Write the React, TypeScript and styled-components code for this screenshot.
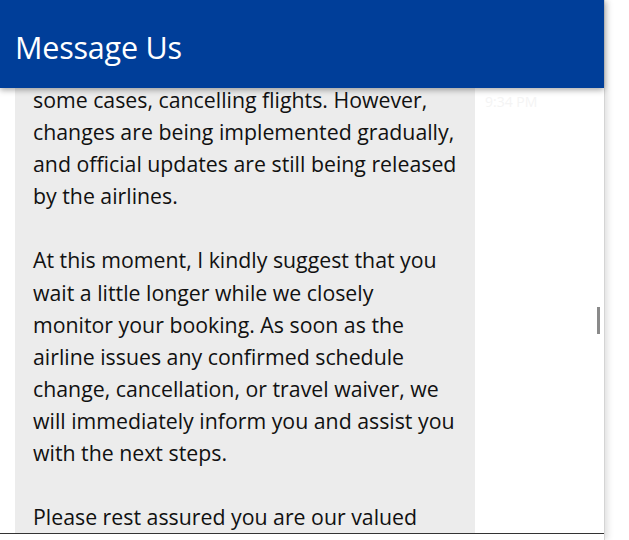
import { FC } from 'react'
import styled, { createGlobalStyle } from 'styled-components'

const GlobalStyle = createGlobalStyle`
  html, body {
    margin: 0;
    padding: 0;
    background: #ffffff;
    font-family: 'Open Sans', 'Noto Sans', sans-serif;
  }
`

const Page = styled.div`
  height: 540px;
  overflow: hidden;
  width: 629px;
`

const Panel = styled.div`
  background: #ffffff;
  border-right: 1px solid #d4d4d4;
  box-shadow: 3px 0 6px rgba(0, 0, 0, 0.12);
  display: flex;
  flex-direction: column;
  height: 540px;
  position: relative;
  width: 604px;
`

const Header = styled.header`
  align-items: center;
  background: #003e99;
  box-shadow: 0 2px 6px rgba(0, 0, 0, 0.35);
  display: flex;
  flex-shrink: 0;
  height: 88px;
  padding: 0 15px;
  position: relative;
  z-index: 2;
`

const Title = styled.h1`
  color: #ffffff;
  font-size: 30.5px;
  font-weight: 400;
  letter-spacing: -0.2px;
  margin: 0;
  padding-top: 5px;
`

const Thread = styled.div`
  display: flex;
  flex: 1;
  margin-top: -4px;
  overflow: hidden;
  padding-left: 15px;
`

const Bubble = styled.div`
  background: #ececec;
  box-sizing: border-box;
  color: #111111;
  font-size: 21.3px;
  line-height: 32.1px;
  padding: 0 18px;
  width: 460px;
`

const Paragraph = styled.p`
  margin: 0 0 32.1px;
  white-space: nowrap;
`

const Time = styled.span`
  color: #f4f4f4;
  font-size: 14px;
  padding: 8px 0 0 10px;
`

const Composer = styled.div`
  border-top: 1px solid #333333;
  flex-shrink: 0;
  height: 6px;
`

const ScrollThumb = styled.div`
  background: #8a8a8a;
  height: 27px;
  position: absolute;
  right: 4px;
  top: 307px;
  width: 3px;
`

const lines = [
  [
    'some cases, cancelling flights. However,',
    'changes are being implemented gradually,',
    'and official updates are still being released',
    'by the airlines.',
  ],
  [
    'At this moment, I kindly suggest that you',
    'wait a little longer while we closely',
    'monitor your booking. As soon as the',
    'airline issues any confirmed schedule',
    'change, cancellation, or travel waiver, we',
    'will immediately inform you and assist you',
    'with the next steps.',
  ],
  ['Please rest assured you are our valued'],
]

const App: FC = () => (
  <Page>
    <GlobalStyle />
    <Panel>
      <Header>
        <Title>Message Us</Title>
      </Header>
      <Thread>
        <Bubble>
          {lines.map((para, i) => (
            <Paragraph key={i}>
              {para.map((l, j) => (
                <span key={j}>
                  {l}
                  <br />
                </span>
              ))}
            </Paragraph>
          ))}
        </Bubble>
        <Time>9:34 PM</Time>
      </Thread>
      <Composer />
      <ScrollThumb />
    </Panel>
  </Page>
)

export default App
